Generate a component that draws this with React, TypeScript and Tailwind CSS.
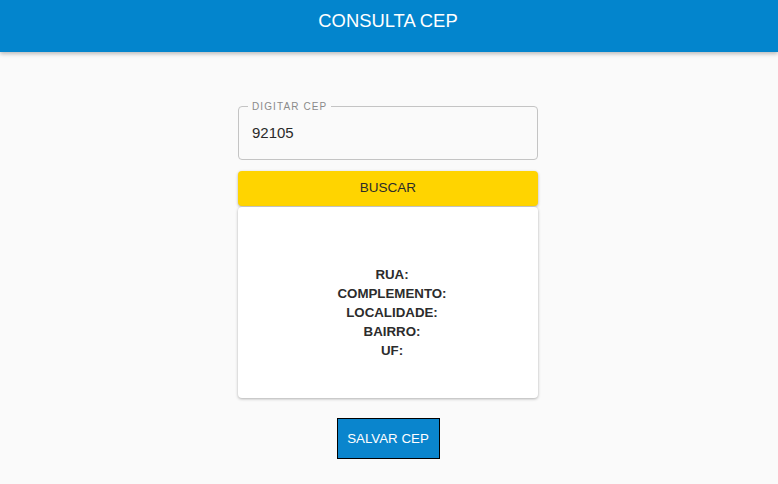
import React from "react";

export default function App() {
  return (
    <div className="min-h-[484px] bg-[#fafafa]" style={{ fontFamily: "'Liberation Sans', Arial, sans-serif" }}>
      <header className="h-[52px] bg-[#0385cd] flex justify-center pr-[2px] shadow-[0_2px_4px_rgba(0,0,0,0.25)]">
        <h1 className="text-white text-[18.4px] leading-none mt-[12px]">CONSULTA CEP</h1>
      </header>
      <main className="pr-[2px] pt-[54px] flex justify-center">
        <div className="w-[300px] flex flex-col items-center">
          <div className="relative w-full h-[54px] border border-[#c4c4c4] rounded-[4px]">
            <span className="absolute -top-[6px] left-[9px] px-[4px] bg-[#fafafa] text-[10px] leading-[12px] text-[#8a8a8a] tracking-[1.1px]">DIGITAR CEP</span>
            <div className="pl-[13px] pt-[16px] text-[15px] leading-[20px] text-[#2a2a2a]">92105</div>
          </div>
          <button className="mt-[11px] w-full h-[35px] bg-[#ffd400] rounded-[4px] text-[13.5px] text-[#2b2b2b] shadow-[0_1px_3px_rgba(0,0,0,0.3)]">BUSCAR</button>
          <div className="mt-[1px] w-full h-[191px] bg-white rounded-[4px] shadow-[0_1px_3px_rgba(0,0,0,0.3)] pt-[58px] pl-[8px] flex flex-col items-center text-[13.3px] leading-[19px] font-bold text-[#2c2c2c]">
            <span>RUA:</span>
            <span>COMPLEMENTO:</span>
            <span>LOCALIDADE:</span>
            <span>BAIRRO:</span>
            <span>UF:</span>
          </div>
          <button className="mt-[20px] w-[103px] h-[41px] bg-[#0a85cd] border border-black text-white text-[13.3px]">SALVAR CEP</button>
        </div>
      </main>
    </div>
  );
}
